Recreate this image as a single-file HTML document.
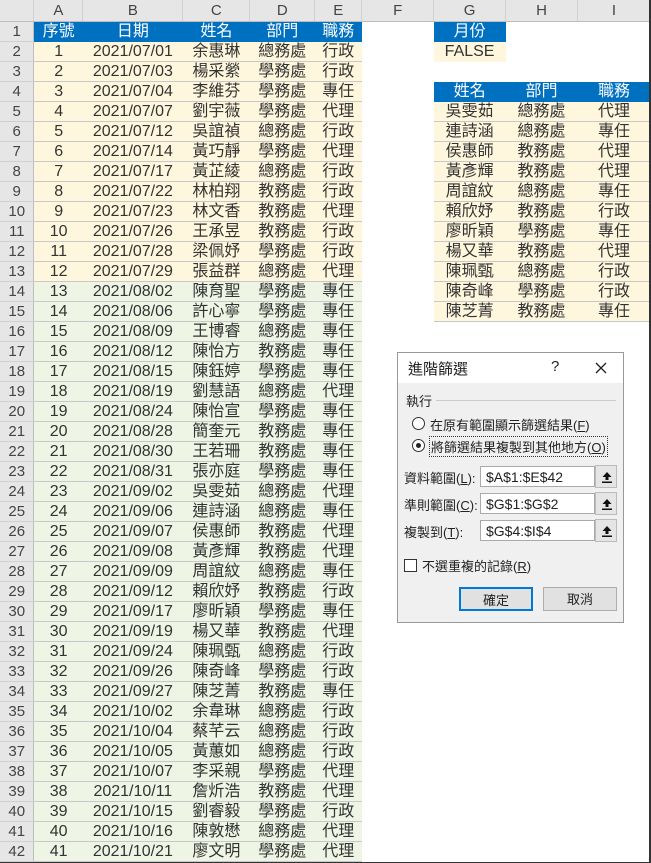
<!DOCTYPE html><html><head><meta charset="utf-8"><style>
body{margin:0;width:651px;height:863px;overflow:hidden;background:#fff;font-family:"Liberation Sans","Noto Sans CJK TC",sans-serif;color:#333;position:relative}
table{border-collapse:collapse;table-layout:fixed;position:absolute;left:0;top:0}
td{height:19px;padding:0;text-align:center;font-size:16px;line-height:19px;white-space:nowrap;overflow:hidden;border-bottom:1px solid #fff}
tr.h td{height:21px;background:#e6e6e6;border-bottom:1px solid #bdbdbd;border-right:1px solid #d0d0d0;color:#444;font-size:15px}
td.n{background:#e6e6e6;border-right:1px solid #bdbdbd;border-bottom:1px solid #d0d0d0;color:#444;font-size:15px}
td.b{background:#0070c0;color:#fff;border-bottom:1px solid #0070c0}
td.y{background:#fff7dd;border-bottom:1px solid #c8c8c8}
td.g{background:#eef5e5;border-bottom:1px solid #c8c8c8}
.dlg{position:absolute;left:397px;top:352px;width:225px;height:269px;background:#f0f0f0;border:1px solid #999;font-size:13px;color:#222}
.dlg .t{height:30px;background:#fff;position:relative}
.ab{position:absolute;white-space:nowrap}
.in{position:absolute;left:82px;width:115px;height:21px;background:#fff;border:1px solid #aaa;line-height:21px;padding-left:5px;box-sizing:border-box;font-size:14px}
.ib{position:absolute;left:197px;width:22px;height:23px;background:#e5e5e5;border:1px solid #bbb;box-sizing:border-box}
.ib svg{position:absolute;left:5px;top:5px}
.rad{position:absolute;left:14px;width:11px;height:11px;border:1px solid #333;border-radius:50%;background:#fff}
.btn{position:absolute;top:234px;height:24px;line-height:24px;text-align:center;background:#e1e1e1;border:1px solid #adadad;box-sizing:border-box}
</style></head><body>
<table>
<colgroup><col style="width:34px"><col style="width:49px"><col style="width:100px"><col style="width:67px"><col style="width:65px"><col style="width:47px"><col style="width:72px"><col style="width:72px"><col style="width:72px"><col style="width:73px"></colgroup>
<tr class="h"><td style="background:#e6e6e6"></td><td>A</td><td>B</td><td>C</td><td>D</td><td>E</td><td>F</td><td>G</td><td>H</td><td>I</td></tr>
<tr><td class="n">1</td><td class="b">序號</td><td class="b">日期</td><td class="b">姓名</td><td class="b">部門</td><td class="b">職務</td><td></td><td class="b">月份</td><td></td><td></td></tr>
<tr><td class="n">2</td><td class="y">1</td><td class="y">2021/07/01</td><td class="y">余惠琳</td><td class="y">總務處</td><td class="y">行政</td><td></td><td class="y" style="border-bottom-color:#fff7dd">FALSE</td><td></td><td></td></tr>
<tr><td class="n">3</td><td class="y">2</td><td class="y">2021/07/03</td><td class="y">楊采縈</td><td class="y">學務處</td><td class="y">行政</td><td></td><td></td><td></td><td></td></tr>
<tr><td class="n">4</td><td class="y">3</td><td class="y">2021/07/04</td><td class="y">李維芬</td><td class="y">學務處</td><td class="y">專任</td><td></td><td class="b">姓名</td><td class="b">部門</td><td class="b">職務</td></tr>
<tr><td class="n">5</td><td class="y">4</td><td class="y">2021/07/07</td><td class="y">劉宇薇</td><td class="y">學務處</td><td class="y">代理</td><td></td><td class="y">吳雯茹</td><td class="y">總務處</td><td class="y">代理</td></tr>
<tr><td class="n">6</td><td class="y">5</td><td class="y">2021/07/12</td><td class="y">吳誼禎</td><td class="y">總務處</td><td class="y">行政</td><td></td><td class="y">連詩涵</td><td class="y">總務處</td><td class="y">專任</td></tr>
<tr><td class="n">7</td><td class="y">6</td><td class="y">2021/07/14</td><td class="y">黃巧靜</td><td class="y">學務處</td><td class="y">代理</td><td></td><td class="y">侯惠師</td><td class="y">教務處</td><td class="y">代理</td></tr>
<tr><td class="n">8</td><td class="y">7</td><td class="y">2021/07/17</td><td class="y">黃芷綾</td><td class="y">總務處</td><td class="y">行政</td><td></td><td class="y">黃彥輝</td><td class="y">教務處</td><td class="y">代理</td></tr>
<tr><td class="n">9</td><td class="y">8</td><td class="y">2021/07/22</td><td class="y">林柏翔</td><td class="y">教務處</td><td class="y">行政</td><td></td><td class="y">周誼紋</td><td class="y">總務處</td><td class="y">專任</td></tr>
<tr><td class="n">10</td><td class="y">9</td><td class="y">2021/07/23</td><td class="y">林文香</td><td class="y">教務處</td><td class="y">代理</td><td></td><td class="y">賴欣妤</td><td class="y">教務處</td><td class="y">行政</td></tr>
<tr><td class="n">11</td><td class="y">10</td><td class="y">2021/07/26</td><td class="y">王承昱</td><td class="y">教務處</td><td class="y">行政</td><td></td><td class="y">廖昕穎</td><td class="y">學務處</td><td class="y">專任</td></tr>
<tr><td class="n">12</td><td class="y">11</td><td class="y">2021/07/28</td><td class="y">梁佩妤</td><td class="y">學務處</td><td class="y">行政</td><td></td><td class="y">楊又華</td><td class="y">教務處</td><td class="y">代理</td></tr>
<tr><td class="n">13</td><td class="y">12</td><td class="y">2021/07/29</td><td class="y">張益群</td><td class="y">總務處</td><td class="y">代理</td><td></td><td class="y">陳珮甄</td><td class="y">總務處</td><td class="y">行政</td></tr>
<tr><td class="n">14</td><td class="g">13</td><td class="g">2021/08/02</td><td class="g">陳育聖</td><td class="g">學務處</td><td class="g">專任</td><td></td><td class="y">陳奇峰</td><td class="y">學務處</td><td class="y">行政</td></tr>
<tr><td class="n">15</td><td class="g">14</td><td class="g">2021/08/06</td><td class="g">許心寧</td><td class="g">學務處</td><td class="g">專任</td><td></td><td class="y">陳芝菁</td><td class="y">教務處</td><td class="y">專任</td></tr>
<tr><td class="n">16</td><td class="g">15</td><td class="g">2021/08/09</td><td class="g">王博睿</td><td class="g">總務處</td><td class="g">專任</td><td></td><td></td><td></td><td></td></tr>
<tr><td class="n">17</td><td class="g">16</td><td class="g">2021/08/12</td><td class="g">陳怡方</td><td class="g">教務處</td><td class="g">專任</td><td></td><td></td><td></td><td></td></tr>
<tr><td class="n">18</td><td class="g">17</td><td class="g">2021/08/15</td><td class="g">陳鈺婷</td><td class="g">學務處</td><td class="g">專任</td><td></td><td></td><td></td><td></td></tr>
<tr><td class="n">19</td><td class="g">18</td><td class="g">2021/08/19</td><td class="g">劉慧語</td><td class="g">總務處</td><td class="g">代理</td><td></td><td></td><td></td><td></td></tr>
<tr><td class="n">20</td><td class="g">19</td><td class="g">2021/08/24</td><td class="g">陳怡宣</td><td class="g">學務處</td><td class="g">專任</td><td></td><td></td><td></td><td></td></tr>
<tr><td class="n">21</td><td class="g">20</td><td class="g">2021/08/28</td><td class="g">簡奎元</td><td class="g">教務處</td><td class="g">專任</td><td></td><td></td><td></td><td></td></tr>
<tr><td class="n">22</td><td class="g">21</td><td class="g">2021/08/30</td><td class="g">王若珊</td><td class="g">教務處</td><td class="g">專任</td><td></td><td></td><td></td><td></td></tr>
<tr><td class="n">23</td><td class="g">22</td><td class="g">2021/08/31</td><td class="g">張亦庭</td><td class="g">學務處</td><td class="g">專任</td><td></td><td></td><td></td><td></td></tr>
<tr><td class="n">24</td><td class="g">23</td><td class="g">2021/09/02</td><td class="g">吳雯茹</td><td class="g">總務處</td><td class="g">代理</td><td></td><td></td><td></td><td></td></tr>
<tr><td class="n">25</td><td class="g">24</td><td class="g">2021/09/06</td><td class="g">連詩涵</td><td class="g">總務處</td><td class="g">專任</td><td></td><td></td><td></td><td></td></tr>
<tr><td class="n">26</td><td class="g">25</td><td class="g">2021/09/07</td><td class="g">侯惠師</td><td class="g">教務處</td><td class="g">代理</td><td></td><td></td><td></td><td></td></tr>
<tr><td class="n">27</td><td class="g">26</td><td class="g">2021/09/08</td><td class="g">黃彥輝</td><td class="g">教務處</td><td class="g">代理</td><td></td><td></td><td></td><td></td></tr>
<tr><td class="n">28</td><td class="g">27</td><td class="g">2021/09/09</td><td class="g">周誼紋</td><td class="g">總務處</td><td class="g">專任</td><td></td><td></td><td></td><td></td></tr>
<tr><td class="n">29</td><td class="g">28</td><td class="g">2021/09/12</td><td class="g">賴欣妤</td><td class="g">教務處</td><td class="g">行政</td><td></td><td></td><td></td><td></td></tr>
<tr><td class="n">30</td><td class="g">29</td><td class="g">2021/09/17</td><td class="g">廖昕穎</td><td class="g">學務處</td><td class="g">專任</td><td></td><td></td><td></td><td></td></tr>
<tr><td class="n">31</td><td class="g">30</td><td class="g">2021/09/19</td><td class="g">楊又華</td><td class="g">教務處</td><td class="g">代理</td><td></td><td></td><td></td><td></td></tr>
<tr><td class="n">32</td><td class="g">31</td><td class="g">2021/09/24</td><td class="g">陳珮甄</td><td class="g">總務處</td><td class="g">行政</td><td></td><td></td><td></td><td></td></tr>
<tr><td class="n">33</td><td class="g">32</td><td class="g">2021/09/26</td><td class="g">陳奇峰</td><td class="g">學務處</td><td class="g">行政</td><td></td><td></td><td></td><td></td></tr>
<tr><td class="n">34</td><td class="g">33</td><td class="g">2021/09/27</td><td class="g">陳芝菁</td><td class="g">教務處</td><td class="g">專任</td><td></td><td></td><td></td><td></td></tr>
<tr><td class="n">35</td><td class="g">34</td><td class="g">2021/10/02</td><td class="g">余韋琳</td><td class="g">總務處</td><td class="g">行政</td><td></td><td></td><td></td><td></td></tr>
<tr><td class="n">36</td><td class="g">35</td><td class="g">2021/10/04</td><td class="g">蔡芊云</td><td class="g">總務處</td><td class="g">行政</td><td></td><td></td><td></td><td></td></tr>
<tr><td class="n">37</td><td class="g">36</td><td class="g">2021/10/05</td><td class="g">黃蕙如</td><td class="g">總務處</td><td class="g">行政</td><td></td><td></td><td></td><td></td></tr>
<tr><td class="n">38</td><td class="g">37</td><td class="g">2021/10/07</td><td class="g">李采親</td><td class="g">學務處</td><td class="g">代理</td><td></td><td></td><td></td><td></td></tr>
<tr><td class="n">39</td><td class="g">38</td><td class="g">2021/10/11</td><td class="g">詹炘浩</td><td class="g">教務處</td><td class="g">代理</td><td></td><td></td><td></td><td></td></tr>
<tr><td class="n">40</td><td class="g">39</td><td class="g">2021/10/15</td><td class="g">劉睿毅</td><td class="g">學務處</td><td class="g">行政</td><td></td><td></td><td></td><td></td></tr>
<tr><td class="n">41</td><td class="g">40</td><td class="g">2021/10/16</td><td class="g">陳敦懋</td><td class="g">總務處</td><td class="g">代理</td><td></td><td></td><td></td><td></td></tr>
<tr><td class="n">42</td><td class="g">41</td><td class="g">2021/10/21</td><td class="g">廖文明</td><td class="g">學務處</td><td class="g">代理</td><td></td><td></td><td></td><td></td></tr>
</table>
<div style="position:absolute;right:0;top:0;width:2px;height:863px;background:#333"></div>
<div style="position:absolute;left:0;bottom:0;width:651px;height:1px;background:#333"></div>

<div class="dlg">
 <div class="t"><span class="ab" style="left:10px;top:5px;font-size:15px">進階篩選</span><span class="ab" style="left:153px;top:5px;font-size:15px">?</span>
 <svg class="ab" style="left:197px;top:9px" width="12" height="12"><path d="M1 1L11 11M11 1L1 11" stroke="#222" stroke-width="1.3"/></svg></div>
 <span class="ab" style="left:8px;top:38px">執行</span><div class="ab" style="left:38px;top:47px;width:180px;height:1px;background:#ccc"></div>
 <div class="rad" style="top:64px"></div><span class="ab" style="left:32px;top:62px">在原有範圍顯示篩選結果(<u>F</u>)</span>
 <div class="rad" style="top:86px"><div style="position:absolute;left:3px;top:3px;width:5px;height:5px;border-radius:50%;background:#222"></div></div><span class="ab" style="left:31px;top:83px;border:1px dotted #333;padding:0 1px">將篩選結果複製到其他地方(<u>O</u>)</span>
 <span class="ab" style="left:6px;top:115px">資料範圍(<u>L</u>):</span><div class="in" style="top:113px">$A$1:$E$42</div><div class="ib" style="top:112px"><svg width="12" height="12"><path d="M6 1L1.5 6H4.5V9H7.5V6H10.5Z" fill="#111"/><rect x="1" y="10.5" width="10" height="1.5" fill="#111"/></svg></div>
 <span class="ab" style="left:6px;top:142px">準則範圍(<u>C</u>):</span><div class="in" style="top:140px">$G$1:$G$2</div><div class="ib" style="top:139px"><svg width="12" height="12"><path d="M6 1L1.5 6H4.5V9H7.5V6H10.5Z" fill="#111"/><rect x="1" y="10.5" width="10" height="1.5" fill="#111"/></svg></div>
 <span class="ab" style="left:6px;top:169px">複製到(<u>T</u>):</span><div class="in" style="top:167px">$G$4:$I$4</div><div class="ib" style="top:166px"><svg width="12" height="12"><path d="M6 1L1.5 6H4.5V9H7.5V6H10.5Z" fill="#111"/><rect x="1" y="10.5" width="10" height="1.5" fill="#111"/></svg></div>
 <div class="ab" style="left:6px;top:206px;width:11px;height:11px;border:1px solid #333;background:#fff"></div><span class="ab" style="left:24px;top:203px">不選重複的記錄(<u>R</u>)</span>
 <div class="btn" style="left:61px;width:74px;border:2px solid #0078d7">確定</div>
 <div class="btn" style="left:145px;width:74px">取消</div>
</div>
</body></html>
